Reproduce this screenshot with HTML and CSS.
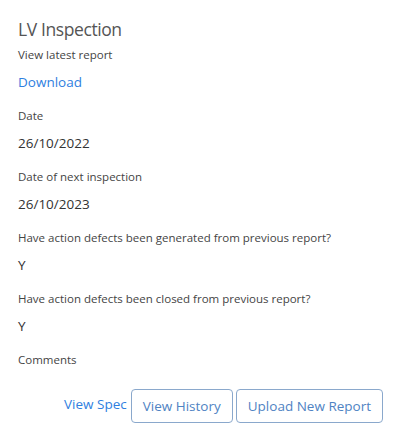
FILE: index.html
```html
<!DOCTYPE html>
<html>
<head>
<meta charset="utf-8">
<link rel="stylesheet" href="styles.css">
</head>
<body>
<div class="card">
  <h2 class="title">LV Inspection</h2>
  <div class="field">
    <div class="label">View latest report</div>
    <div class="value"><a class="link" href="#">Download</a></div>
  </div>
  <div class="field">
    <div class="label">Date</div>
    <div class="value">26/10/2022</div>
  </div>
  <div class="field">
    <div class="label">Date of next inspection</div>
    <div class="value">26/10/2023</div>
  </div>
  <div class="field">
    <div class="label">Have action defects been generated from previous report?</div>
    <div class="value">Y</div>
  </div>
  <div class="field">
    <div class="label">Have action defects been closed from previous report?</div>
    <div class="value">Y</div>
  </div>
  <div class="field">
    <div class="label">Comments</div>
  </div>
  <div class="actions">
    <a class="link spec" href="#">View Spec</a>
    <button class="btn">View History</button>
    <button class="btn">Upload New Report</button>
  </div>
</div>
</body>
</html>
```
FILE: styles.css
```css
html, body {
  margin: 0;
  padding: 0;
  background: #fff;
}
body {
  font-family: "Open Sans", "Noto Sans", sans-serif;
  color: #333;
}
.card {
  width: 400px;
  height: 441px;
  box-sizing: border-box;
  padding: 16px 17px 0 18px;
  background: #fff;
}
.title {
  margin: 0 0 3px 0;
  font-size: 17.5px;
  font-weight: 400;
  line-height: 26px;
  letter-spacing: -0.4px;
  color: #555;
}
.field {
  margin-bottom: 14px;
}
.label {
  font-size: 11.5px;
  line-height: 20px;
  color: #444;
}
.value {
  margin-top: 7px;
  font-size: 13.5px;
  line-height: 20px;
  color: #333;
}
.link {
  color: #2f80e0;
  text-decoration: none;
}
.actions {
  display: flex;
  justify-content: flex-end;
  align-items: center;
  gap: 3px;
  margin-top: 19px;
}
.spec {
  font-size: 13.5px;
  margin-right: 1px;
  margin-top: -4px;
}
.btn {
  font-family: inherit;
  font-size: 13.5px;
  color: #4f83c3;
  background: #fff;
  border: 1px solid #8aa8cc;
  border-radius: 4px;
  height: 34px;
  padding: 0 11px;
  cursor: pointer;
}
```
